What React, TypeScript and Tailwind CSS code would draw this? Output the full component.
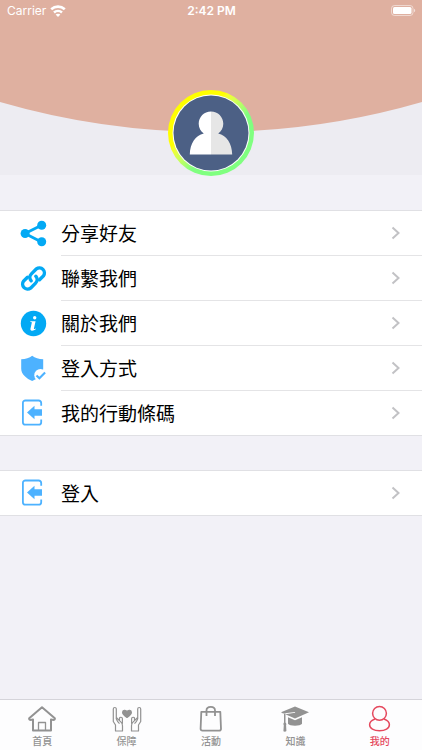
import type { ReactNode } from "react";

function ShareIcon() {
  return (
    <svg className="size-7" viewBox="0 0 28 28" fill="#03a9f4" aria-hidden="true">
      <path d="M21.5 5.2 5 13.500 21.500 22" fill="none" stroke="#03a9f4" strokeWidth="2.800" />
      <circle cx="21.700" cy="5.200" r="4.500" />
      <circle cx="5.100" cy="13.500" r="4.500" />
      <circle cx="21.700" cy="21.800" r="4.500" />
    </svg>
  );
}

function LinkIcon() {
  return (
    <svg className="size-7" viewBox="0 0 28 28" fill="none" stroke="#03a9f4" strokeWidth="3.400" strokeLinecap="round" aria-hidden="true">
      <path d="M11.200 15.800a5 5 0 0 1 .2-6.900l5-5a5 5 0 0 1 7 7l-3.900 3.900" />
      <path d="M15.800 11.200a5 5 0 0 1-.2 6.900l-5 5a5 5 0 0 1-7-7l3.900-3.900" />
    </svg>
  );
}

function InfoIcon() {
  return (
    <svg className="size-7" viewBox="0 0 28 28" aria-hidden="true">
      <circle cx="13.500" cy="13.500" r="12.700" fill="#03a9f4" />
      <circle cx="14.700" cy="7.800" r="1.700" fill="#fff" />
      <path d="M10.400 11.200h5.200l-1.700 7.300c-.1.700.6.600 1.800-.1l.3.700c-1.500 1.300-3 1.700-4.100 1.600-1.300-.1-1.700-1-1.400-2.200l1.300-5.700c.1-.6-.4-.7-1.500-.7z" fill="#fff" />
    </svg>
  );
}

function ShieldIcon() {
  return (
    <svg className="size-7" viewBox="0 0 28 28" aria-hidden="true">
      <path d="M12.200.8c2.800 2.500 6.500 3.300 11 3.500v9.500c0 5.500-5.800 9.900-11 12.300C6.700 23.700 1.200 19.300 1.200 13.800V4.300c4.500-.2 8.200-1 11-3.500z" fill="#4db2ff" />
      <circle cx="20.500" cy="20.200" r="6.200" fill="#fff" />
      <path d="m16.500 20.400 2.900 2.900 5.700-5.900" fill="none" stroke="#4db2ff" strokeWidth="2.100" />
    </svg>
  );
}

function EnterIcon() {
  return (
    <svg className="size-7" viewBox="0 0 28 28" aria-hidden="true">
      <path d="M21.200 6.800V4a2.500 2.500 0 0 0-2.500-2.500H5.400A2.500 2.500 0 0 0 2.900 4v19.200a2.500 2.500 0 0 0 2.500 2.500h13.300a2.500 2.500 0 0 0 2.500-2.500v-2.800" fill="none" stroke="#4db2ff" strokeWidth="1.800" />
      <path d="m7 13.500 7.500-6.700v3.500H22v6.500h-7.500v3.500z" fill="#4db2ff" />
    </svg>
  );
}

function HomeIcon() {
  return (
    <svg className="size-7" viewBox="0 0 28 28" fill="none" stroke="#929292" strokeWidth="2" strokeLinejoin="round" aria-hidden="true">
      <path d="M14 2.300 1.200 13.200c-.4 1.800.9 2 3.800 1.400v10.800h18v-10.800c2.900.6 4.200.4 3.800-1.400z" />
      <path d="M10.500 25.500V17.500h7v8" strokeWidth="1.300" />
    </svg>
  );
}

function HandsIcon() {
  return (
    <svg className="h-7 w-8" viewBox="0 0 32 28" fill="none" stroke="#929292" strokeWidth="1.200" strokeLinejoin="round" aria-hidden="true">
      <path d="M16 12.500c-2.500-1.800-4.400-3.300-4.400-5.100 0-2.500 3.300-2.900 4.400-.7 1.100-2.200 4.400-1.800 4.400.7 0 1.800-1.900 3.300-4.400 5.100z" fill="#929292" />
      <path d="M4.500 26v-6L2.300 16.500V4c0-2 3-2 3 0v8.500l4.500 4.400c1.200 1.100 1.700 2.300 1.700 3.800V26zM5.300 12.500c-.6 1.500 0 2.600 3.200 6.200M8.500 15.700V13.500c0-1.700 2.900-1.700 2.900.2v5" />
      <path d="M27.500 26v-6l2.200-3.500V4c0-2-3-2-3 0v8.500l-4.500 4.400c-1.200 1.100-1.700 2.300-1.700 3.800V26zM26.700 12.500c.6 1.500 0 2.600-3.200 6.200M23.500 15.700V13.500c0-1.700-2.900-1.700-2.900.2v5" />
    </svg>
  );
}

function BagIcon() {
  return (
    <svg className="size-7" viewBox="0 0 28 28" fill="none" stroke="#929292" strokeWidth="1.800" strokeLinejoin="round" aria-hidden="true">
      <path d="M4.300 6.800h19l.7 17c0 1.200-.7 1.900-1.900 1.900H5.500c-1.200 0-1.900-.7-1.900-1.900z" />
      <path d="M9.500 11V5.500c0-4.800 8.500-4.800 8.500 0V11" />
    </svg>
  );
}

function CapIcon() {
  return (
    <svg className="size-7" viewBox="0 0 28 28" fill="#929292" aria-hidden="true">
      <path d="M14 1.500 28 7.300 14 13.500 4.300 9.300l9.900-1.500-.2-.9-12 1.500L0 7.300z" />
      <path d="M7 12.200 14 15.300l7-3.100v6.500c-1.300 2.600-12.700 2.600-14 0z" />
      <path d="M3 8.500h1.500v9c1 1 1 2 .6 2.700l.3 5.800c-.9.800-2 .8-3 .2l.4-6c-.6-.8-.5-1.900.2-2.700z" />
    </svg>
  );
}

function PersonIcon() {
  return (
    <svg className="size-7" viewBox="0 0 28 28" fill="none" stroke="#e5485d" strokeWidth="1.500" aria-hidden="true">
      <circle cx="13.500" cy="8.300" r="6.900" />
      <path d="M9 14c-3.200 1.100-5.400 3.300-5.400 5.800 0 3.500 4.200 5.900 9.900 5.900s9.900-2.400 9.900-5.900c0-2.500-2.200-4.700-5.400-5.800" />
    </svg>
  );
}

type Item = { label: string; icon: ReactNode };

const menu: Item[] = [
  { label: "分享好友", icon: <ShareIcon /> },
  { label: "聯繫我們", icon: <LinkIcon /> },
  { label: "關於我們", icon: <InfoIcon /> },
  { label: "登入方式", icon: <ShieldIcon /> },
  { label: "我的行動條碼", icon: <EnterIcon /> },
];

const account: Item[] = [{ label: "登入", icon: <EnterIcon /> }];

const tabs: Item[] = [
  { label: "首頁", icon: <HomeIcon /> },
  { label: "保障", icon: <HandsIcon /> },
  { label: "活動", icon: <BagIcon /> },
  { label: "知識", icon: <CapIcon /> },
  { label: "我的", icon: <PersonIcon /> },
];

function List({ items }: { items: Item[] }) {
  return (
    <ul className="border-y border-[#e0e0e4] bg-white">
      {items.map(({ label, icon }, i) => (
        <li key={label}>
          <button type="button" className="flex w-full items-stretch pl-5 text-left">
            <span className="flex w-[41px] items-center">{icon}</span>
            <span
              className={`flex flex-1 items-center justify-between pr-5 ${
                i < items.length - 1 ? "h-[45px] border-b border-[#e4e4e6]" : "h-11"
              }`}
            >
              <span className="text-[19px] leading-6 text-black">{label}</span>
              <svg className="h-4 w-3" viewBox="0 0 12 16" fill="none" stroke="#c2c2c5" strokeWidth="2" aria-hidden="true">
                <path d="m2.500 2.500 6 5.500-6 5.500" />
              </svg>
            </span>
          </button>
        </li>
      ))}
    </ul>
  );
}

function StatusBar() {
  return (
    <div className="relative grid h-[22px] grid-cols-3 items-center pr-1.5 pl-[7px] font-['Inter',sans-serif] text-white">
      <span className="flex items-center gap-1 text-xs">
        Carrier
        <svg className="h-3 w-4" viewBox="0 0 16 12" fill="none" stroke="#fff" strokeWidth="2.600" aria-label="Wi-Fi">
          <path d="M1.200 4.300c4-3.600 9.600-3.600 13.600 0M4 7.500c2.300-2 5.700-2 8 0" />
          <path d="M8 12 5.600 9.600c1.300-1.200 3.500-1.200 4.800 0z" fill="#fff" stroke="none" />
        </svg>
      </span>
      <span className="text-center text-xs font-semibold">2:42 PM</span>
      <svg className="h-3 w-[25px] justify-self-end" viewBox="0 0 25 12" aria-label="Battery">
        <rect x=".5" y=".5" width="21.500" height="10" rx="3" fill="none" stroke="#fff" strokeOpacity=".5" />
        <rect x="2" y="2" width="18.500" height="7" rx="1.500" fill="#fff" />
        <path d="M23 3.800c1.600.5 1.600 2.900 0 3.400z" fill="#fff" fillOpacity=".6" />
      </svg>
    </div>
  );
}

export default function App() {
  return (
    <div className="flex min-h-screen flex-col bg-[#f2f1f7] font-['Noto_Sans_CJK_TC',sans-serif]">
      <header className="relative flex h-[175px] flex-col justify-between bg-[#edecf2]">
        <svg className="absolute inset-x-0 top-0 h-[132px] w-full" viewBox="0 0 422 132" preserveAspectRatio="none" aria-hidden="true">
          <path d="M0 0H422V102A757 757 0 0 1 0 102Z" fill="#dfb0a0" />
        </svg>
        <StatusBar />
        <div className="relative mx-auto -mb-px size-[86px] rounded-full bg-linear-135 from-[#ffff00] from-35% to-[#80ff80] to-60% p-1">
          <svg className="size-full" viewBox="0 0 78 78" role="img" aria-label="Avatar">
            <circle cx="39" cy="39" r="38.500" fill="#fff" />
            <circle cx="39" cy="39" r="37.500" fill="#4c6085" />
            <path d="M39 17.500c-7 0-12.300 5.500-12.300 12.300 0 4.200 2.200 7.600 5.100 9.800C23.500 41.500 18 49.500 17.800 60.500H39z" fill="#fff" />
            <path d="M39 17.500c7 0 12.300 5.500 12.300 12.300 0 4.200-2.200 7.600-5.100 9.800 8.300 1.900 13.800 9.900 14 20.900H39z" fill="#e6e6e6" />
          </svg>
        </div>
      </header>
      <main className="flex flex-1 flex-col gap-[34px] pt-[35px] pb-8">
        <List items={menu} />
        <List items={account} />
      </main>
      <nav className="sticky bottom-0 grid h-[51px] grid-cols-5 border-t border-[#d5d4da] bg-[#fdfdfe] pt-[5px]">
        {tabs.map(({ label, icon }, i) => (
          <button
            key={label}
            type="button"
            className={`flex flex-col items-center text-[10px] leading-4 font-medium ${
              i === tabs.length - 1 ? "text-[#e5485d]" : "text-[#929292]"
            }`}
          >
            {icon}
            {label}
          </button>
        ))}
      </nav>
    </div>
  );
}
